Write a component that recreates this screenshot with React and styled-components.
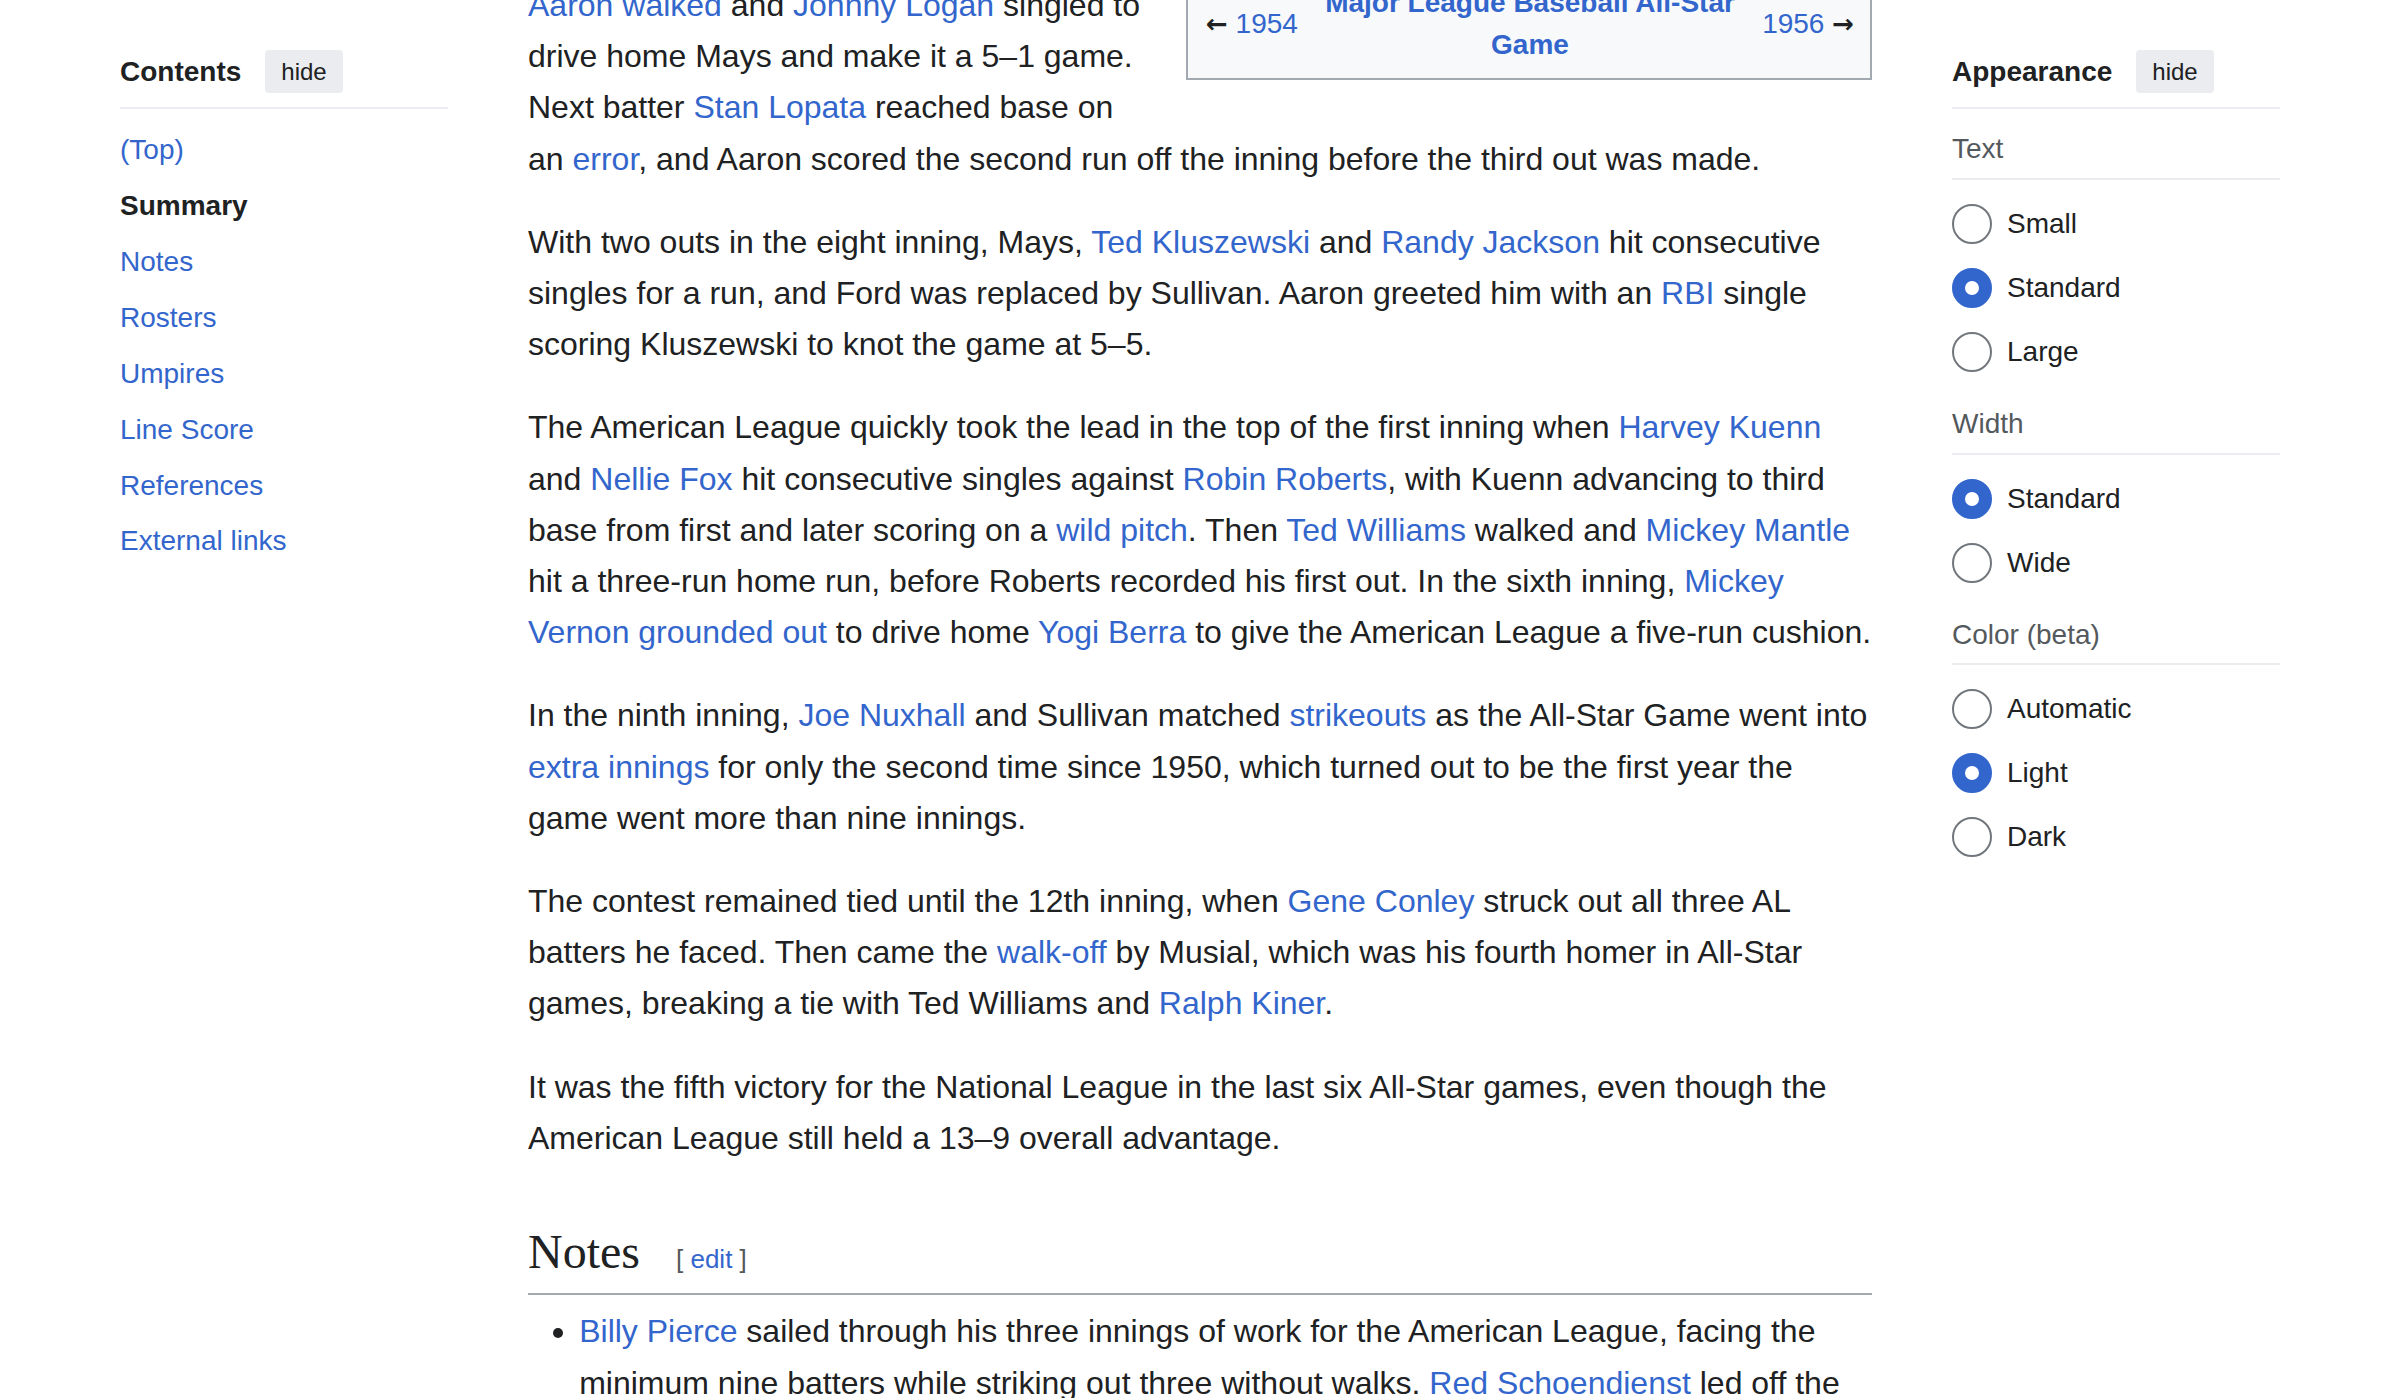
import React from "react";
import styled, { createGlobalStyle } from "styled-components";

const GlobalStyle = createGlobalStyle`
  html, body {
    margin: 0;
    padding: 0;
    background: #fff;
  }
  body {
    font-family: "Liberation Sans", Arial, sans-serif;
    color: #202122;
    overflow: hidden;
  }
`;

const Page = styled.div`
  display: grid;
  grid-template-columns: 328px 1fr 328px;
  column-gap: 80px;
  padding: 0 120px;
  height: 1398px;
  overflow: hidden;
`;

const Sidebar = styled.aside`
  padding-top: 50px;
`;

const SideHeader = styled.div`
  display: flex;
  align-items: center;
  gap: 24px;
  height: 43px;
  padding-bottom: 14px;
  border-bottom: 2px solid #eaecf0;
`;

const SideTitle = styled.h2`
  margin: 0;
  font-size: 28px;
  font-weight: bold;
  line-height: 1;
  color: #202122;
`;

const HideButton = styled.button`
  font-family: inherit;
  font-size: 24px;
  color: #202122;
  background: #eaecf0;
  border: 0;
  border-radius: 4px;
  height: 43px;
  padding: 0 16px;
`;

const TocList = styled.ul`
  list-style: none;
  margin: 13px 0 0;
  padding: 0;
`;

const TocItem = styled.li`
  font-size: 28px;
  line-height: 44.8px;
  padding: 5.6px 0;
  color: ${(p) => (p.$active ? "#202122" : "#3366cc")};
  font-weight: ${(p) => (p.$active ? "bold" : "normal")};
`;

const Main = styled.main`
  min-width: 0;
  margin-top: -20px;
  font-size: 32px;
  line-height: 51.2px;
`;

const Para = styled.p`
  margin: 0 0 32px;
`;

const A = styled.a`
  color: #3366cc;
  text-decoration: none;
`;

const SuccessionBox = styled.div`
  float: right;
  width: 686px;
  box-sizing: border-box;
  margin: 0 0 28px 40px;
  padding: 0 16px 12px 18px;
  background: #f8f9fa;
  border: 2px solid #a2a9b1;
  display: grid;
  grid-template-columns: auto 1fr auto;
  align-items: center;
  font-size: 28px;
  line-height: 42px;
`;

const Arrow = styled.span`
  font-family: "DejaVu Sans", sans-serif;
  font-size: 26px;
  font-weight: bold;
  color: #202122;
`;

const BoxTitle = styled.div`
  text-align: center;
  font-weight: bold;
  color: #3366cc;
  padding: 0 8px;
`;

const SectionHeading = styled.h2`
  clear: both;
  margin: 57px 0 0;
  padding-bottom: 3px;
  border-bottom: 2px solid #a2a9b1;
  font-family: "Liberation Serif", "Times New Roman", serif;
  font-weight: normal;
  font-size: 48px;
  line-height: 62.4px;
  color: #202122;
`;

const EditSection = styled.span`
  margin-left: 36px;
  font-family: "Liberation Sans", Arial, sans-serif;
  font-size: 26px;
  color: #54595d;
`;

const NotesList = styled.ul`
  margin: 11px 0 0 51.2px;
  padding: 0;
  list-style: disc;
`;

const OptionHeading = styled.div`
  margin-top: ${(p) => (p.$first ? 0 : 2)}px;
  padding: ${(p) => (p.$first ? 18 : 16)}px 0 6px;
  border-bottom: 2px solid #eaecf0;
  font-size: 28px;
  line-height: 44.8px;
  color: #54595d;
`;

const RadioGroup = styled.div`
  padding-top: 12px;
`;

const RadioRow = styled.label`
  display: flex;
  align-items: center;
  gap: 15px;
  height: 64px;
  font-size: 28px;
  color: #202122;
`;

const RadioCircle = styled.span`
  flex-shrink: 0;
  width: 40px;
  height: 40px;
  box-sizing: border-box;
  border-radius: 50%;
  background: #fff;
  border: ${(p) => (p.$checked ? "13px solid #3366cc" : "2px solid #72777d")};
`;

const toc = [
  "(Top)",
  "Summary",
  "Notes",
  "Rosters",
  "Umpires",
  "Line Score",
  "References",
  "External links",
];

const appearance = [
  { label: "Text", options: ["Small", "Standard", "Large"], checked: "Standard" },
  { label: "Width", options: ["Standard", "Wide"], checked: "Standard" },
  { label: "Color (beta)", options: ["Automatic", "Light", "Dark"], checked: "Light" },
];

const App = () => {
  return (
    <Page>
      <GlobalStyle />
      <Sidebar>
        <SideHeader>
          <SideTitle>Contents</SideTitle>
          <HideButton>hide</HideButton>
        </SideHeader>
        <TocList>
          {toc.map((t) => (
            <TocItem key={t} $active={t === "Summary"}>
              {t}
            </TocItem>
          ))}
        </TocList>
      </Sidebar>

      <Main>
        <SuccessionBox>
          <span>
            <Arrow>←</Arrow> <A>1954</A>
          </span>
          <BoxTitle>Major League Baseball All-Star Game</BoxTitle>
          <span>
            <A>1956</A> <Arrow>→</Arrow>
          </span>
        </SuccessionBox>
        <Para>
          <A>Aaron</A> <A>walked</A> and <A>Johnny Logan</A> singled to drive
          home Mays and make it a 5–1 game. Next batter <A>Stan Lopata</A>{" "}
          reached base on an <A>error</A>, and Aaron scored the second run off
          the inning before the third out was made.
        </Para>
        <Para>
          With two outs in the eight inning, Mays, <A>Ted Kluszewski</A> and{" "}
          <A>Randy Jackson</A> hit consecutive singles for a run, and Ford was
          replaced by Sullivan. Aaron greeted him with an <A>RBI</A> single
          scoring Kluszewski to knot the game at 5–5.
        </Para>
        <Para>
          The American League quickly took the lead in the top of the first
          inning when <A>Harvey Kuenn</A> and <A>Nellie Fox</A> hit consecutive
          singles against <A>Robin Roberts</A>, with Kuenn advancing to third
          base from first and later scoring on a <A>wild pitch</A>. Then{" "}
          <A>Ted Williams</A> walked and <A>Mickey Mantle</A> hit a three-run
          home run, before Roberts recorded his first out. In the sixth inning,{" "}
          <A>Mickey Vernon</A> <A>grounded out</A> to drive home{" "}
          <A>Yogi Berra</A> to give the American League a five-run cushion.
        </Para>
        <Para>
          In the ninth inning, <A>Joe Nuxhall</A> and Sullivan matched{" "}
          <A>strikeouts</A> as the All-Star Game went into{" "}
          <A>extra innings</A> for only the second time since 1950, which
          turned out to be the first year the game went more than nine innings.
        </Para>
        <Para>
          The contest remained tied until the 12th inning, when{" "}
          <A>Gene Conley</A> struck out all three AL batters he faced. Then came
          the <A>walk-off</A> by Musial, which was his fourth homer in All-Star
          games, breaking a tie with Ted Williams and <A>Ralph Kiner</A>.
        </Para>
        <Para>
          It was the fifth victory for the National League in the last six
          All-Star games, even though the American League still held a 13–9
          overall advantage.
        </Para>

        <SectionHeading>
          Notes
          <EditSection>
            [ <A>edit</A> ]
          </EditSection>
        </SectionHeading>
        <NotesList>
          <li>
            <A>Billy Pierce</A> sailed through his three innings of work for the
            American League, facing the minimum nine batters while striking out
            three without walks. <A>Red Schoendienst</A> led off the bottom of
            the first with a single, but was stranded at first base.
          </li>
        </NotesList>
      </Main>

      <Sidebar>
        <SideHeader>
          <SideTitle>Appearance</SideTitle>
          <HideButton>hide</HideButton>
        </SideHeader>
        {appearance.map((group, i) => (
          <div key={group.label}>
            <OptionHeading $first={i === 0}>{group.label}</OptionHeading>
            <RadioGroup>
              {group.options.map((o) => (
                <RadioRow key={o}>
                  <RadioCircle $checked={o === group.checked} />
                  {o}
                </RadioRow>
              ))}
            </RadioGroup>
          </div>
        ))}
      </Sidebar>
    </Page>
  );
};

export default App;
